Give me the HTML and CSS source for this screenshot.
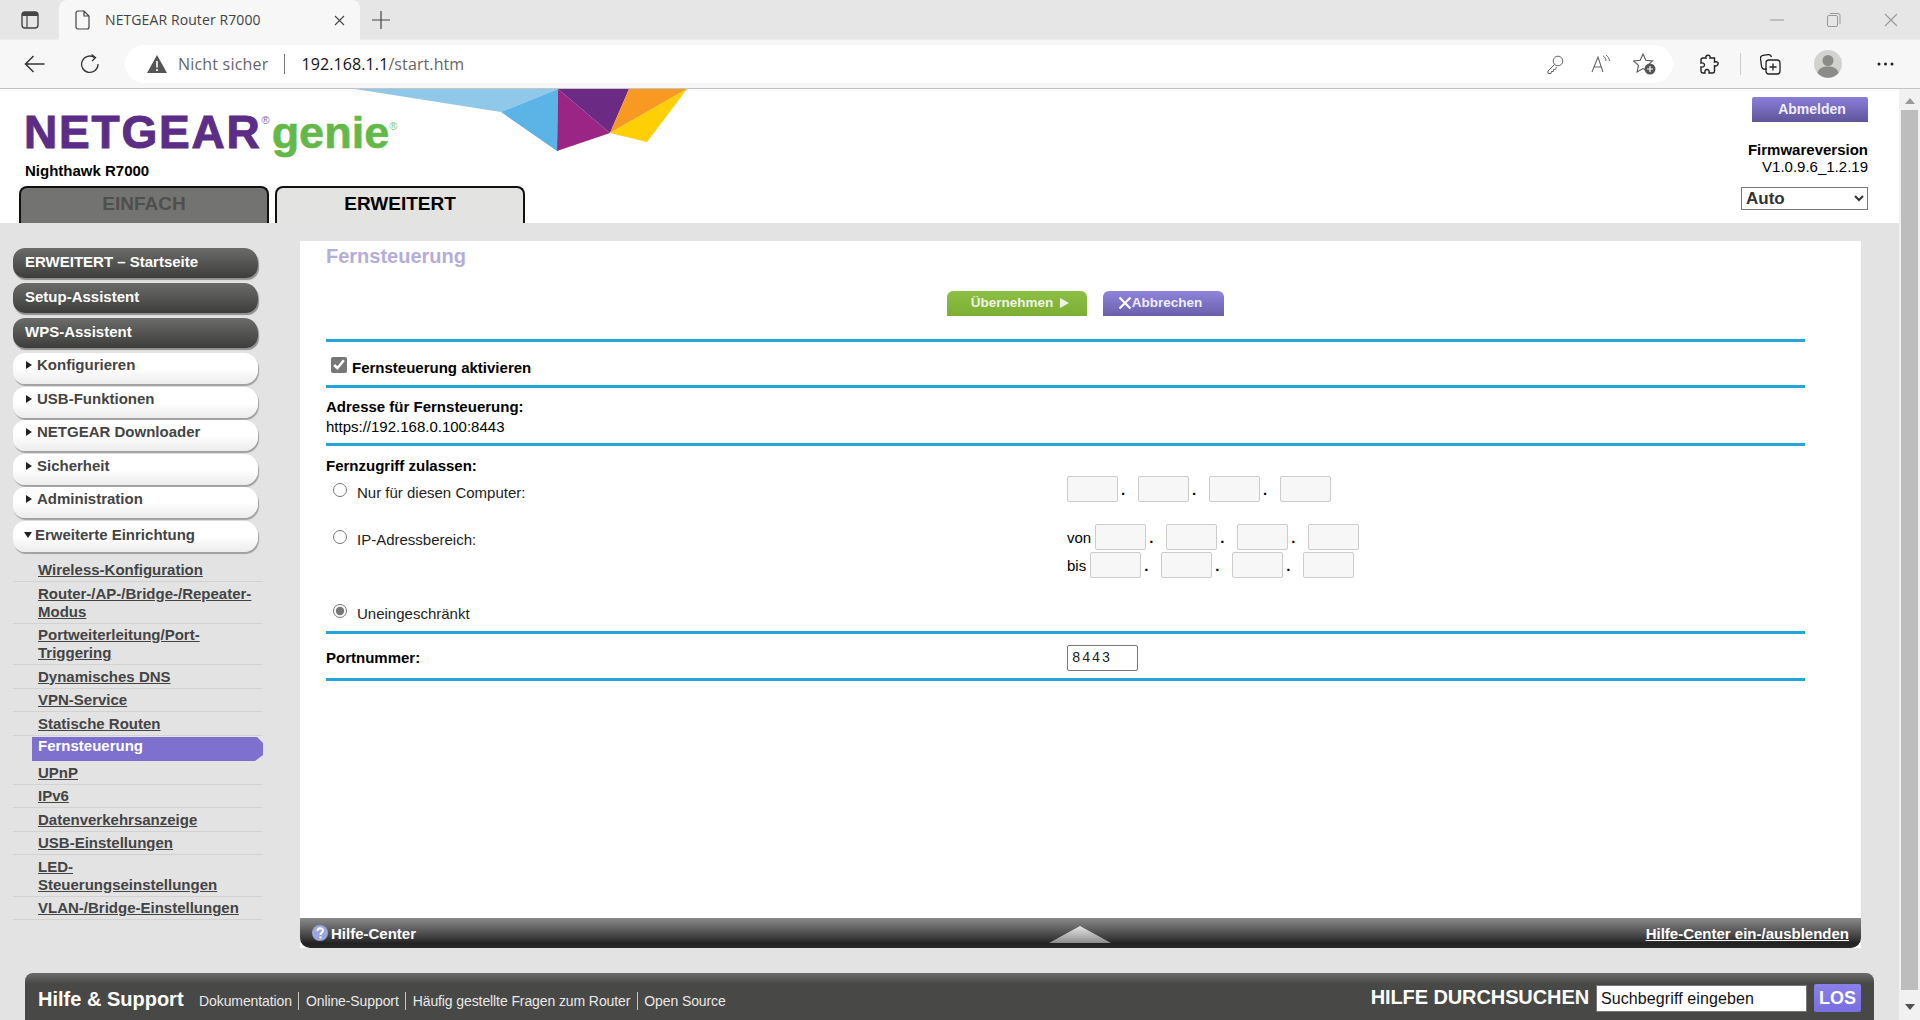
FILE: index.html
```html
<!DOCTYPE html>
<html lang="de">
<head>
    <meta charset="UTF-8">
    <title>NETGEAR Router R7000</title>
    <link rel="stylesheet" href="styles.css">
</head>
<body>
    <!-- browser frame -->
    <div class="tabstrip">
        <svg class="ico side-ico" width="20" height="20" viewBox="0 0 20 20"><rect x="2" y="2" width="16" height="16" rx="3" fill="none" stroke="#444" stroke-width="1.4"/><path d="M2 6V5a3 3 0 0 1 3-3h10a3 3 0 0 1 3 3v1z" fill="#444"/><path d="M7 6v12" stroke="#444" stroke-width="1.2"/></svg>
        <div class="tab">
            <svg width="16" height="20" viewBox="0 0 16 20"><path d="M3 1h6l5 5v11a2 2 0 0 1-2 2H3a2 2 0 0 1-2-2V3a2 2 0 0 1 2-2zM9 1v5h5" fill="none" stroke="#444" stroke-width="1.2"/></svg>
            <span class="tab-title">NETGEAR Router R7000</span>
            <svg width="11" height="11" viewBox="0 0 11 11"><path d="M1 1l9 9M10 1l-9 9" stroke="#444" stroke-width="1.1"/></svg>
        </div>
        <svg class="ico plus-ico" width="18" height="18" viewBox="0 0 18 18"><path d="M9 0v18M0 9h18" stroke="#444" stroke-width="1.2"/></svg>
        <div class="win-btns">
            <svg width="14" height="14" viewBox="0 0 14 14"><path d="M0 7h14" stroke="#999"/></svg>
            <svg width="14" height="14" viewBox="0 0 14 14"><rect x=".5" y="2.5" width="10" height="11" rx="1.5" fill="none" stroke="#999"/><path d="M3 .5h8a2 2 0 0 1 2 2V11" fill="none" stroke="#999"/></svg>
            <svg width="14" height="14" viewBox="0 0 14 14"><path d="M1 1l12 12M13 1L1 13" stroke="#999" stroke-width="1.1"/></svg>
        </div>
    </div>
    <div class="toolbar">
        <svg class="back-ico" width="21" height="18" viewBox="0 0 21 18"><path d="M20.5 9H1.5M9.5 1l-8 8 8 8" fill="none" stroke="#333" stroke-width="1.5"/></svg>
        <svg class="reload-ico" width="20" height="20" viewBox="0 0 20 20"><path d="M14.6 3.6A8.2 8.2 0 1 0 18 10" fill="none" stroke="#333" stroke-width="1.3"/><path d="M11.5 0.5l4 3-3.4 3.6" fill="none" stroke="#333" stroke-width="1.3"/></svg>
        <div class="address">
            <svg class="warn-ico" width="20" height="18" viewBox="0 0 20 18"><path d="M10 0l10 18H0z" fill="#555"/><path d="M10 6v6.5M10 14v2" stroke="#fff" stroke-width="1.6"/></svg>
            <span class="not-secure">Nicht sicher</span>
            <span class="addr-sep"></span>
            <span class="url">192.168.1.1<span class="url-path">/start.htm</span></span>
            <svg class="addr-ico key" width="17" height="19" viewBox="0 0 17 19"><circle cx="11" cy="6" r="4.8" fill="none" stroke="#666"/><path d="M7.5 9.5L1 16v2.5h3l.5-2h2v-2h2l1-2.5" fill="none" stroke="#666"/></svg>
            <svg class="addr-ico read" width="20" height="18" viewBox="0 0 20 18"><path d="M1 17L7 2l5 15M3 12h7.5" fill="none" stroke="#666" stroke-width="1.1"/><path d="M12 1c2 1 3 3 3 5M15 0c2 1.5 3.500 4 3.500 6" fill="none" stroke="#666"/></svg>
            <svg class="addr-ico fav" width="23" height="22" viewBox="0 0 23 22"><path d="M10 1l2.800 6.200 6.700.7-5 4.500 1.400 6.600-5.900-3.400-5.900 3.400 1.400-6.600-5-4.500 6.700-.7z" fill="none" stroke="#555" stroke-width="1.1"/><circle cx="17" cy="16" r="5.500" fill="#555"/><path d="M17 13v6M14 16h6" stroke="#fff" stroke-width="1.200"/></svg>
        </div>
        <svg class="puzzle-ico" width="19" height="20" viewBox="0 0 19 20"><path d="M7 1.500c2-1 3.500.5 3 2.500h4.500v4c2.500-.8 4 .5 3.500 2s-1.500 2.500-3.500 1.800V17a2 2 0 0 1-2 2H9c.5-2.500-.5-3.500-2-3.500S4.500 16.500 5 19H3a2 2 0 0 1-2-2v-4c2 .5 3.500-.5 3.500-2S3 8.500 1 9V6a2 2 0 0 1 2-2h3c-.5-1 0-2 1-2.500z" fill="none" stroke="#222" stroke-width="1.400"/></svg>
        <span class="tool-sep"></span>
        <svg class="coll-ico" width="21" height="21" viewBox="0 0 21 21"><path d="M6 15H4a3 3 0 0 1-3-3V4a3 3 0 0 1 3-3h5a3 3 0 0 1 3 3" fill="none" stroke="#222" stroke-width="1.300" transform="rotate(-8 6 8)"/><rect x="6" y="6" width="14" height="14" rx="3" fill="none" stroke="#222" stroke-width="1.300"/><path d="M13 9.500v7M9.500 13h7" stroke="#222" stroke-width="1.300"/></svg>
        <svg class="avatar" width="28" height="28" viewBox="0 0 28 28"><circle cx="14" cy="14" r="14" fill="#d2d2ce"/><circle cx="14" cy="10.500" r="5.500" fill="#8b8b87"/><path d="M3.500 23c1-5 5.500-6.500 10.500-6.500S23.500 18 24.500 23a14 14 0 0 1-21 0z" fill="#8b8b87"/></svg>
        <svg class="more-ico" width="17" height="4" viewBox="0 0 17 4"><circle cx="2" cy="2" r="1.500" fill="#222"/><circle cx="8.500" cy="2" r="1.500" fill="#222"/><circle cx="15" cy="2" r="1.500" fill="#222"/></svg>
    </div>

    <div class="viewport">
        <div class="page">
            <header class="head">
                <!-- genie logo shards -->
                <svg class="shards" width="340" height="64" viewBox="355 89 340 64">
                    <polygon points="355,89 558,89 501,112" fill="#8fc8e8"/>
                    <polygon points="558,89 501,112 557,151" fill="#5bb4e5"/>
                    <polygon points="558,89 557,151 610,133" fill="#9b2585"/>
                    <polygon points="558,89 610,133 629,89" fill="#6b2a84"/>
                    <polygon points="629,89 610,133 687,89" fill="#f89a21"/>
                    <polygon points="687,89 610,133 647,142" fill="#ffcf06"/>
                </svg>
                <div class="head-left">
                    <div class="logo"><span class="logo-ng">NETGEAR</span><sup class="reg">®</sup><span class="logo-genie">genie</span><sup class="reg reg-green">®</sup></div>
                    <div class="model">Nighthawk R7000</div>
                    <div class="mode-tabs">
                        <div class="mode-tab mode-off">EINFACH</div>
                        <div class="mode-tab mode-on">ERWEITERT</div>
                    </div>
                </div>
                <div class="head-right">
                    <button class="logout">Abmelden</button>
                    <div class="fw-label">Firmwareversion</div>
                    <div class="fw-value">V1.0.9.6_1.2.19</div>
                    <select class="lang"><option>Auto</option></select>
                </div>
            </header>

            <div class="main">
                <nav class="sidebar">
                    <div class="nav-dark">ERWEITERT – Startseite</div>
                    <div class="nav-dark">Setup-Assistent</div>
                    <div class="nav-dark">WPS-Assistent</div>
                    <div class="nav-light"><i class="arrow"></i>Konfigurieren</div>
                    <div class="nav-light"><i class="arrow"></i>USB-Funktionen</div>
                    <div class="nav-light"><i class="arrow"></i>NETGEAR Downloader</div>
                    <div class="nav-light"><i class="arrow"></i>Sicherheit</div>
                    <div class="nav-light"><i class="arrow"></i>Administration</div>
                    <div class="nav-light nav-open"><i class="arrow arrow-down"></i>Erweiterte Einrichtung</div>
                    <ul class="subnav">
                        <li><a href="#">Wireless-Konfiguration</a></li>
                        <li><a href="#">Router-/AP-/Bridge-/Repeater-Modus</a></li>
                        <li><a href="#">Portweiterleitung/Port-Triggering</a></li>
                        <li><a href="#">Dynamisches DNS</a></li>
                        <li><a href="#">VPN-Service</a></li>
                        <li><a href="#">Statische Routen</a></li>
                        <li class="current"><a href="#">Fernsteuerung</a></li>
                        <li><a href="#">UPnP</a></li>
                        <li><a href="#">IPv6</a></li>
                        <li><a href="#">Datenverkehrsanzeige</a></li>
                        <li><a href="#">USB-Einstellungen</a></li>
                        <li><a href="#">LED-<br>Steuerungseinstellungen</a></li>
                        <li><a href="#">VLAN-/Bridge-Einstellungen</a></li>
                    </ul>
                </nav>

                <section class="panel">
                    <div class="panel-body">
                        <h1>Fernsteuerung</h1>
                        <div class="actions">
                            <button class="btn btn-apply">Übernehmen <i class="btn-arrow"></i></button>
                            <button class="btn btn-cancel"><svg width="14" height="14" viewBox="0 0 14 14"><path d="M1.500 1.500l11 11M12.500 1.500l-11 11" stroke="#fff" stroke-width="2.200"/></svg>Abbrechen</button>
                        </div>
                        <div class="rule"></div>
                        <div class="row row-enable">
                            <input type="checkbox" class="check" checked>
                            <b>Fernsteuerung aktivieren</b>
                        </div>
                        <div class="rule"></div>
                        <div class="row row-address">
                            <b>Adresse für Fernsteuerung:</b>
                            <div>https://192.168.0.100:8443</div>
                        </div>
                        <div class="rule"></div>
                        <div class="row row-access">
                            <b class="access-title">Fernzugriff zulassen:</b>
                            <div class="access access-one">
                                <label class="radio-label"><input type="radio" name="acc">Nur für diesen Computer:</label>
                                <div class="ip">
                                    <input disabled><span class="dot">.</span><input disabled><span class="dot">.</span><input disabled><span class="dot">.</span><input disabled>
                                </div>
                            </div>
                            <div class="access access-range">
                                <label class="radio-label"><input type="radio" name="acc">IP-Adressbereich:</label>
                                <div class="ip-range">
                                    <div class="ip"><span class="ip-word">von</span><input disabled><span class="dot">.</span><input disabled><span class="dot">.</span><input disabled><span class="dot">.</span><input disabled></div>
                                    <div class="ip"><span class="ip-word">bis</span><input disabled><span class="dot">.</span><input disabled><span class="dot">.</span><input disabled><span class="dot">.</span><input disabled></div>
                                </div>
                            </div>
                            <label class="radio-label radio-all"><input type="radio" name="acc" checked>Uneingeschränkt</label>
                        </div>
                        <div class="rule"></div>
                        <div class="row row-port">
                            <b>Portnummer:</b>
                            <input class="port" value="8443">
                        </div>
                        <div class="rule"></div>
                    </div>
                    <div class="helpbar">
                        <span class="help-left"><svg width="16" height="16" viewBox="0 0 16 16"><circle cx="8" cy="8" r="8" fill="#9aa6e0"/><path d="M5.500 6c0-3.500 5.500-3.500 5.500-.5 0 2-2.500 2-2.500 4.500M8.500 11.500v2" fill="none" stroke="#fff" stroke-width="2"/></svg>Hilfe-Center</span>
                        <i class="help-tri"></i>
                        <a href="#">Hilfe-Center ein-/ausblenden</a>
                    </div>
                </section>
            </div>

            <footer class="foot">
                <div class="foot-links">
                    <strong>Hilfe &amp; Support</strong>
                    <a href="#">Dokumentation</a><a href="#">Online-Support</a><a href="#">Häufig gestellte Fragen zum Router</a><a href="#">Open Source</a>
                </div>
                <div class="foot-search">
                    <strong>HILFE DURCHSUCHEN</strong>
                    <input value="Suchbegriff eingeben">
                    <button>LOS</button>
                </div>
            </footer>
        </div>
        <div class="scrollbar">
            <i class="sb-up"></i>
            <div class="sb-thumb"></div>
            <i class="sb-down"></i>
        </div>
    </div>
</body>
</html>
```

FILE: styles.css
```css
html, body {
    margin: 0;
    height: 1020px;
    overflow: hidden;
}
body {
    font-family: "Liberation Sans", Arial, sans-serif;
    font-size: 15px;
    color: #000;
    background: #e3e3e3;
}
svg {
    display: block;
    flex: none;
}

/* browser frame */
.tabstrip {
    height: 40px;
    background: #e6e6e6;
    display: flex;
    align-items: center;
    border-bottom: 0;
}
.side-ico { margin-left: 20px; }
.tab {
    width: 301px;
    height: 40px;
    margin-left: 19px;
    background: #f7f7f7;
    border-radius: 8px 8px 0 0;
    display: flex;
    align-items: center;
    box-sizing: border-box;
    padding: 0 15px 0 16px;
}
.tab-title {
    flex: 1;
    margin: -2px 0 0 14px;
    font: 14px "Open Sans", sans-serif;
    color: #444;
    letter-spacing: .1px;
}
.plus-ico { margin-left: 12px; }
.win-btns {
    margin-left: auto;
    margin-right: 22px;
    display: flex;
    gap: 43px;
}
.toolbar {
    height: 48px;
    background: #f7f7f7;
    border-bottom: 1px solid #c4c4c4;
    border-top: 1px solid #ececec;
    box-sizing: content-box;
    margin-top: -1px;
    display: flex;
    align-items: center;
}
.back-ico { margin-left: 24px; }
.reload-ico { margin-left: 35px; }
.address {
    width: 1548px;
    height: 38px;
    margin-left: 25px;
    background: #fff;
    border-radius: 19px;
    display: flex;
    align-items: center;
}
.warn-ico { margin-left: 22px; }
.not-secure {
    margin-left: 11px;
    font: 16px "Open Sans", sans-serif;
    color: #666;
    letter-spacing: .2px;
}
.addr-sep {
    width: 1px;
    height: 20px;
    background: #777;
    margin-left: 15px;
}
.url {
    margin-left: 17px;
    font: 16px "Open Sans", sans-serif;
    color: #111;
    letter-spacing: .1px;
}
.url-path { color: #666; }
.addr-ico.key { margin-left: auto; }
.addr-ico.read { margin-left: 27px; }
.addr-ico.fav { margin-left: 22px; margin-right: 17px; }
.puzzle-ico { margin-left: 27px; }
.tool-sep {
    width: 1px;
    height: 22px;
    background: #ccc;
    margin-left: 21px;
}
.coll-ico { margin-left: 19px; }
.avatar { margin-left: 33px; }
.more-ico { margin-left: 35px; }

.viewport {
    display: flex;
    height: 931px;
}
.page {
    width: 1899px;
    flex: none;
    background: #e3e3e3;
}
.scrollbar {
    flex: 1;
    background: #f1f1f1;
    display: flex;
    flex-direction: column;
    align-items: center;
}
.sb-up, .sb-down {
    width: 0;
    height: 0;
    border-left: 5px solid transparent;
    border-right: 5px solid transparent;
}
.sb-up {
    border-bottom: 6px solid #9a9a9a;
    margin-top: 9px;
}
.sb-down {
    border-top: 6px solid #505050;
    margin-top: 14px;
}
.sb-thumb {
    width: 17px;
    height: 880px;
    margin-top: 6px;
    background: #bdbdbd;
}

/* router header */
.head {
    height: 134px;
    background: #fff;
    position: relative;
    display: flex;
    justify-content: space-between;
}
.shards {
    position: absolute;
    left: 355px;
    top: 0;
}
.head-left { padding-left: 19px; }
.logo {
    height: 50px;
    margin: 18px 0 0 5px;
    display: flex;
    align-items: baseline;
    font-weight: bold;
    line-height: 50px;
}
.logo-ng {
    font-size: 46px;
    letter-spacing: 1.800px;
    color: #5c2d87;
    -webkit-text-stroke: 1px #5c2d87;
}
.logo-genie {
    font-size: 45px;
    color: #63b947;
    margin-left: 2px;
    -webkit-text-stroke: .6px #63b947;
}
.reg {
    font-size: 11px;
    font-weight: normal;
    line-height: 1;
    color: #8a6aa8;
    align-self: flex-start;
    margin-top: 8px;
}
.reg-green {
    color: #7fc46a;
    margin-top: 14px;
}
.model {
    font-weight: bold;
    font-size: 15px;
    line-height: 16px;
    margin: 6px 0 0 6px;
}
.mode-tabs {
    display: flex;
    gap: 6px;
    margin-top: 7px;
}
.mode-tab {
    width: 250px;
    height: 37px;
    box-sizing: border-box;
    border: 2px solid #111;
    border-bottom: 0;
    border-radius: 8px 8px 0 0;
    text-align: center;
    font-size: 19px;
    font-weight: bold;
    line-height: 31px;
}
.mode-off {
    background: #737471;
    color: #4f4f4d;
}
.mode-on {
    background: #e3e4e2;
    color: #000;
}
.head-right {
    padding: 8px 31px 0 0;
    display: flex;
    flex-direction: column;
    align-items: flex-end;
    font-size: 15px;
    line-height: 17px;
}
.logout {
    width: 116px;
    height: 25px;
    border: 0;
    padding: 0 0 2px 4px;
    border-radius: 2px 2px 0 0;
    background: linear-gradient(#8a7edb, #5f5599);
    color: #f0eefc;
    font: bold 14px "Liberation Sans", sans-serif;
    margin-bottom: 19px;
}
.fw-label { font-weight: bold; }
.lang {
    width: 127px;
    height: 23px;
    margin-top: 12px;
    border: 1px solid #777;
    border-radius: 0;
    background: #fff;
    color: #333;
    font: bold 17px "Liberation Sans", sans-serif;
}

/* sidebar */
.main {
    display: flex;
    height: 725px;
}
.sidebar {
    width: 300px;
    flex: none;
    box-sizing: border-box;
    padding: 25px 0 0 13px;
}
.nav-dark {
    width: 245px;
    height: 30px;
    margin-bottom: 5px;
    box-sizing: border-box;
    padding-left: 12px;
    border-radius: 12px 14px 12px 12px;
    background: linear-gradient(#6b6b6a, #3d3d3c);
    box-shadow: 1px 2px 1px #8e8e8e;
    color: #fff;
    font-weight: bold;
    line-height: 28px;
}
.nav-light {
    width: 245px;
    height: 31px;
    margin-bottom: 2.500px;
    box-sizing: border-box;
    padding-left: 12px;
    border-radius: 12px 14px 14px 12px;
    background: linear-gradient(#fff 50%, #ececec);
    box-shadow: 1px 2px 1px #a0a0a0;
    color: #444;
    font-weight: bold;
    line-height: 23px;
    display: flex;
    align-items: flex-start;
}
.nav-open {
    margin-top: 1.500px;
    line-height: 28px;
}
.arrow {
    width: 0;
    height: 0;
    margin: 8px 5px 0 1px;
    border-top: 4px solid transparent;
    border-bottom: 4px solid transparent;
    border-left: 6px solid #222;
}
.arrow-down {
    margin: 11px 3px 0 -1px;
    border-left: 4.500px solid transparent;
    border-right: 4.500px solid transparent;
    border-top: 6px solid #222;
    border-bottom: 0;
}
.subnav {
    list-style: none;
    margin: 7px 0 0;
    padding: 0;
    width: 250px;
}
.subnav li {
    padding: 2.500px 10px 2px 25px;
    line-height: 18px;
    border-bottom: 1px solid #d2d2d2;
    font-weight: bold;
}
.subnav a {
    color: #444;
}
.subnav .current {
    margin: 1.500px 0 0 19px;
    padding: 0 0 6px 6px;
    background: #7d70cf;
    border-bottom: 0;
    clip-path: polygon(0 0, calc(100% - 6px) 0, 100% 6px, 100% calc(100% - 6px), calc(100% - 8px) 100%, 0 100%);
}
.subnav .current a {
    color: #fff;
    text-decoration: none;
}

/* content panel */
.panel {
    width: 1561px;
    flex: none;
    margin-top: 18px;
    background: #fff;
    display: flex;
    flex-direction: column;
}
.panel-body {
    flex: 1;
    padding: 0 56px 0 26px;
}
h1 {
    margin: 0;
    height: 30px;
    font-size: 20px;
    line-height: 30px;
    color: #b5add9;
}
.actions {
    display: flex;
    gap: 16px;
    margin: 20px 0 23px 621px;
}
.btn {
    height: 25px;
    border: 0;
    border-radius: 6px 6px 0 0;
    color: #eef3e6;
    font: bold 13.500px "Liberation Sans", sans-serif;
    padding: 0 0 2px;
    display: flex;
    align-items: center;
    justify-content: center;
}
.btn-apply {
    width: 140px;
    padding-left: 6px;
    background: linear-gradient(#8dbf45, #7cae34);
}
.btn-arrow {
    width: 0;
    height: 0;
    margin-left: 7px;
    border-top: 5px solid transparent;
    border-bottom: 5px solid transparent;
    border-left: 9px solid #eef3e6;
}
.btn-cancel {
    width: 121px;
    padding-right: 7px;
    color: #eeeeff;
    background: linear-gradient(#8f85dc, #6a5fa8);
}
.rule {
    height: 3px;
    background: #22a7d8;
}
.row { box-sizing: border-box; }
.row-enable {
    height: 43px;
    display: flex;
    align-items: center;
    padding: 8px 0 0 5px;
}
.check {
    width: 16px;
    height: 16px;
    margin: -6px 5px 0 0;
    accent-color: #777;
}
.row-address {
    height: 55px;
    padding-top: 9px;
    line-height: 20px;
}
.row-access {
    height: 185px;
    padding-top: 12px;
}
.access-title {
    display: block;
    line-height: 16px;
    margin-bottom: 2px;
}
.access {
    display: flex;
}
.access-one { height: 26px; }
.access-range {
    height: 53px;
    margin-top: 22px;
}
.radio-label {
    width: 741px;
    flex: none;
    display: flex;
    align-items: flex-start;
    line-height: 18px;
    color: #222;
}
.radio-label input {
    width: 14px;
    height: 14px;
    margin: -1px 10px 0 7px;
    accent-color: #777;
}
.access-one .radio-label { padding-top: 8px; }
.access-range .radio-label { padding-top: 7px; }
.radio-all {
    margin-top: 28px;
}
.ip {
    display: flex;
    align-items: center;
    height: 26px;
}
.ip input {
    width: 51px;
    height: 26px;
    box-sizing: border-box;
    margin: 0;
    padding: 0;
    border: 1px solid #ccc;
    border-radius: 2px;
    background: #f7f7f7;
}
.ip-word { margin-right: 4px; }
.dot {
    width: 20px;
    box-sizing: border-box;
    padding-left: 3px;
    font-weight: bold;
}
.ip-range {
    display: flex;
    flex-direction: column;
    gap: 2px;
}
.row-port {
    height: 44px;
    padding-top: 3px;
    display: flex;
    align-items: center;
}
.row-port b {
    width: 741px;
    flex: none;
}
.port {
    width: 71px;
    height: 26px;
    box-sizing: border-box;
    margin: 0;
    padding: 0 4px;
    border: 1px solid #777;
    border-radius: 2px;
    font: 14px "Liberation Mono", monospace;
    letter-spacing: 1.500px;
    color: #222;
}
.helpbar {
    height: 30px;
    flex: none;
    display: flex;
    align-items: center;
    justify-content: space-between;
    padding: 0 12px 0 12px;
    box-sizing: border-box;
    border-radius: 0 0 10px 10px;
    background: linear-gradient(#8a8a8a, #4a4a4a 55%, #222 85%, #2a2a2a);
    color: #fff;
    font-weight: bold;
    position: relative;
}
.help-left {
    display: flex;
    align-items: center;
    gap: 3px;
}
.helpbar a { color: #fff; }
.help-tri {
    position: absolute;
    left: 749px;
    top: 8px;
    width: 62px;
    height: 17px;
    background: linear-gradient(#e8e8e8, #8c8c8c);
    clip-path: polygon(50% 0, 100% 100%, 0 100%);
}

/* footer */
.foot {
    width: 1849px;
    height: 60px;
    margin: 25px 0 0 25px;
    box-sizing: border-box;
    padding: 0 13px 0 13px;
    border-radius: 8px 8px 0 0;
    background: linear-gradient(#6b6c69, #484946 18%);
    color: #fff;
    display: flex;
    justify-content: space-between;
    align-items: flex-start;
}
.foot-links {
    display: flex;
    align-items: center;
    height: 56px;
}
.foot-links strong {
    font-size: 20px;
    margin: -4px 9px 0 0;
}
.foot-links a {
    color: #e8e8e8;
    text-decoration: none;
    font-size: 14px;
    letter-spacing: -.1px;
    line-height: 18px;
    padding: 0 6.500px;
    border-right: 1px solid #c9c9c0;
}
.foot-links a:last-child { border-right: 0; }
.foot-search {
    display: flex;
    align-items: center;
    height: 40px;
    margin-top: 5px;
}
.foot-search strong {
    font-size: 20px;
    letter-spacing: -.1px;
    margin-top: -2px;
}
.foot-search input {
    width: 211px;
    height: 27px;
    box-sizing: border-box;
    margin: 0 7px 0 7px;
    padding: 2px 4px 0;
    border: 1px solid #777;
    font: 16px "Liberation Sans", sans-serif;
    letter-spacing: .1px;
    color: #111;
}
.foot-search button {
    width: 47px;
    height: 28px;
    border: 0;
    padding: 0;
    border-radius: 2px;
    background: linear-gradient(#8a80e8, #7a6ee0);
    color: #fff;
    font: bold 18px "Liberation Sans", sans-serif;
}
```
